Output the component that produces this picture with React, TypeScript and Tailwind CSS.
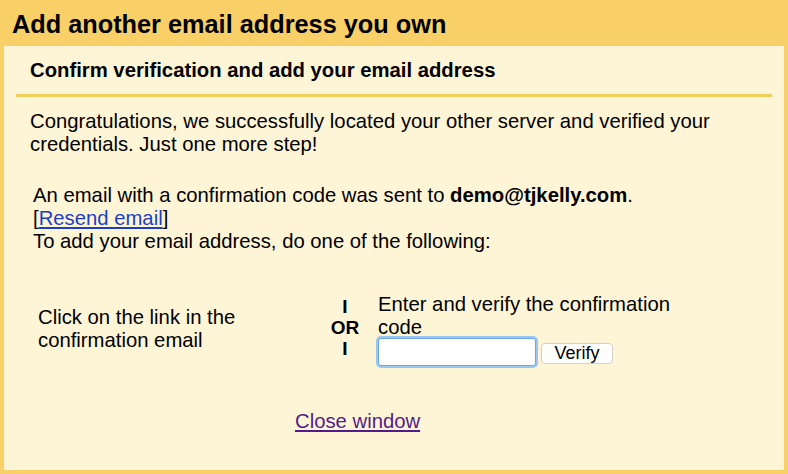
export default function App() {
  return (
    <div className="w-[788px] h-[474px] bg-[#f9d068] flex flex-col text-black font-['Liberation_Sans',Arial,sans-serif]">
      {/* Title bar */}
      <div className="h-[46px] px-[12px] pt-[3px] flex items-center text-[25.3px] font-bold leading-none">
        Add another email address you own
      </div>

      {/* Panel */}
      <div className="flex-1 mx-[4px] mb-[4px] bg-[#fef5d7] flex flex-col">
        <div className="h-[48px] px-[26px] flex items-center text-[20.3px] font-bold">
          Confirm verification and add your email address
        </div>
        <div className="mx-[12px] h-[3px] bg-[#f1cf5c]" />

        <p className="mt-[13px] px-[26px] text-[20.3px] leading-[23px]">
          Congratulations, we successfully located your other server and verified your
          <br />
          credentials. Just one more step!
        </p>

        <div className="mt-[28px] px-[29px] text-[20.3px] leading-[23px]">
          <div>
            An email with a confirmation code was sent to <b>demo@tjkelly.com</b>.
          </div>
          <div>
            [<a href="#" className="text-[#1d3fc4] underline">Resend email</a>]
          </div>
          <div>To add your email address, do one of the following:</div>
        </div>

        <div className="mt-[40px] flex items-start text-[20.3px] leading-[23px]">
          <div className="w-[318px] pl-[34px] pt-[13px]">
            Click on the link in the
            <br />
            confirmation email
          </div>
          <div className="w-[56px] pr-[10px] pt-[4px] flex flex-col items-center font-bold leading-[20px] text-[19px]">
            <span>I</span>
            <span className="py-[1px]">OR</span>
            <span>I</span>
          </div>
          <div className="w-[300px]">
            <div>
              Enter and verify the confirmation
              <br />
              code
            </div>
            <div className="flex items-center gap-[4px] -mt-[1px]">
              <input
                type="text"
                className="w-[158px] h-[28px] bg-white border border-[#6aa6e8] rounded-[3px] shadow-[0_0_0_2px_#9cc6f2] outline-none"
              />
              <button className="w-[72px] h-[21px] mt-[2px] ml-[1px] bg-white border border-[#d4d0c4] rounded-[4px] text-[18px] leading-none flex items-center justify-center">
                Verify
              </button>
            </div>
          </div>
        </div>

        <div className="mt-[40px] pl-[291px] text-[20.3px]">
          <a href="#" className="text-[#551a8b] underline">Close window</a>
        </div>
      </div>
    </div>
  );
}
